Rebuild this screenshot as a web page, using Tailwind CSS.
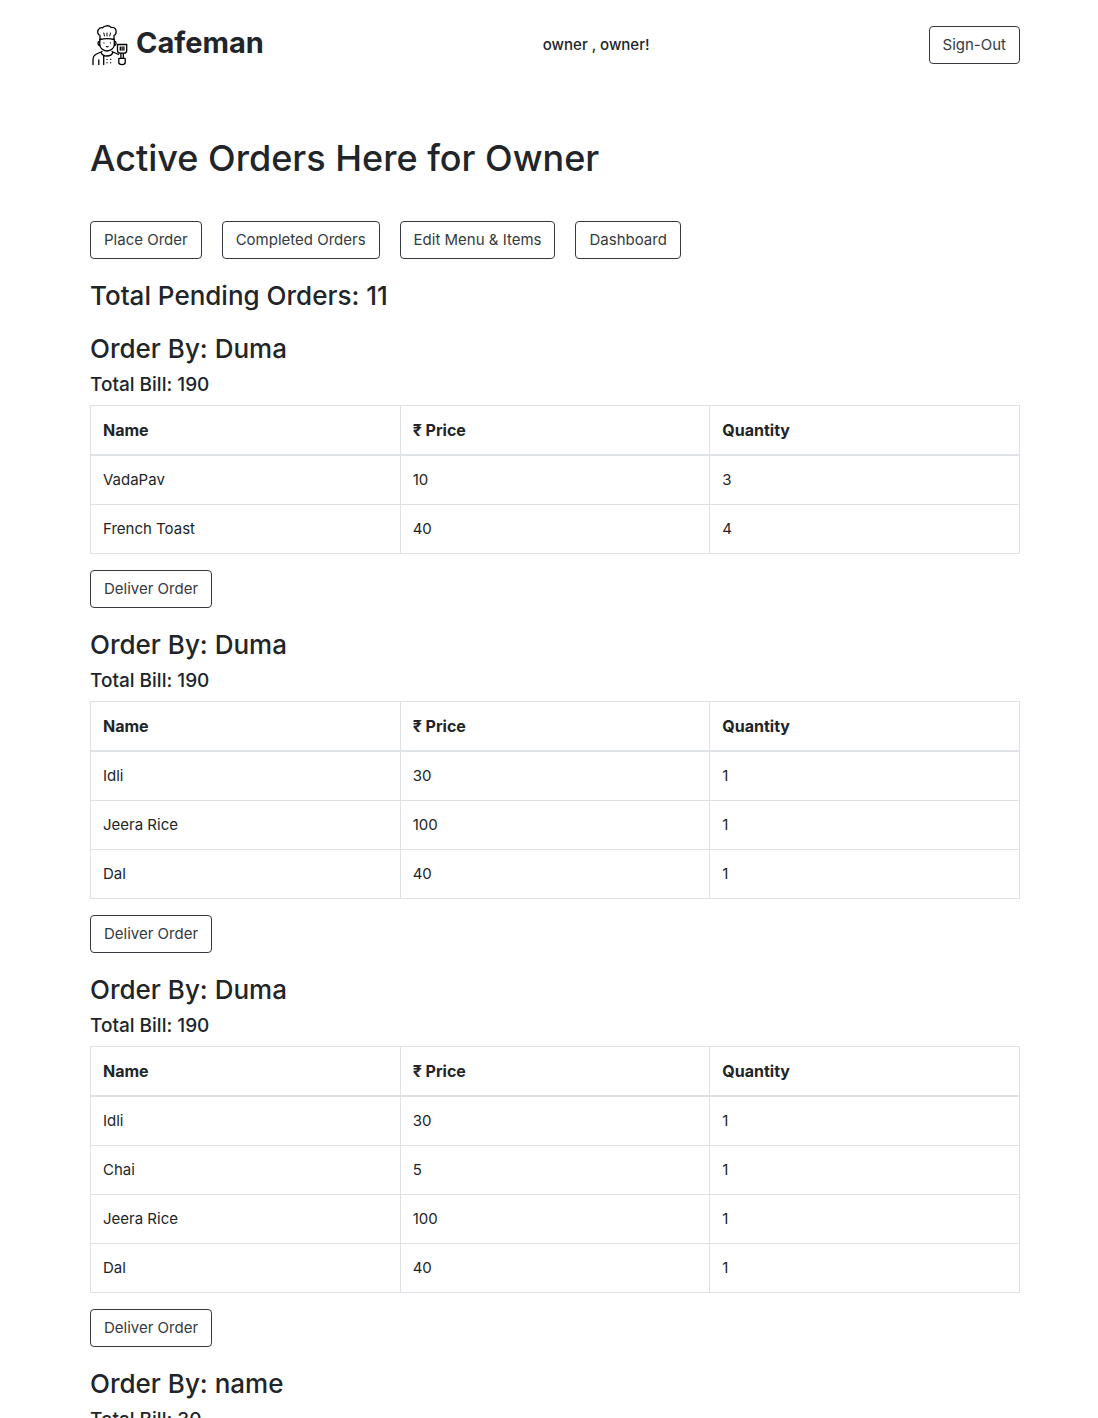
<!DOCTYPE html>
<html lang="en">
<head>
<meta charset="utf-8">
<meta name="viewport" content="width=device-width, initial-scale=1">
<title>Cafeman</title>
<script src="https://cdn.jsdelivr.net/npm/@tailwindcss/browser@4"></script>
</head>
<body class="bg-white pl-3 font-['Inter','Noto_Sans',sans-serif] text-[15px] leading-6 text-[#212529] overflow-x-hidden">
<div class="mx-auto max-w-[960px] px-[15px]">
  <header class="flex items-center justify-between pt-6">
    <a href="#" class="flex items-center gap-2">
      <svg class="ml-0.5 h-[42px] w-9" viewBox="0 0 36 42" fill="none" stroke="#000" stroke-width="1.3" stroke-linecap="round" stroke-linejoin="round" aria-hidden="true">
        <path d="M8 15.500V11.500C5.500 10.500 5 7.500 6.500 5.500C7.500 4 9 3.500 10.500 3.800C12 1.300 17.500 1 19 3.500C21 2.800 23.500 4 24 6.500C24.400 9 23.500 10.800 22 11.500V15.500C17 14.300 13 14.300 8 15.500Z"/>
        <path d="M11.800 9L12.500 12M15 9V12M18.500 9L17.800 12" stroke-width="1"/>
        <path d="M7.800 15.500V20.500C7.800 24 11 27 15 27C19 27 22.300 24 22.300 20.500V15.500M7.500 17.500C5.500 17 5.500 21.500 7.800 21.500M22.500 17.500C24.500 17 24.500 21.500 22.300 21.500"/>
        <path d="M12 18.700V19.100M18.300 18.700V19.100M14.300 22.600C15 23 15.600 23 16.200 22.600" stroke-width="1.100"/>
        <path d="M10 27.500L4.500 30C2 31.200 1 33 1 36V40.500M20 27.500L26.500 30.500M9 28.500C10 31 12 32 15 32C18 32 20 31 20.800 28.500M11.700 32V40.500M6.800 36V40.500"/>
        <path d="M15 35.300V35.400M18.700 35.300V35.400M15 38.700V38.800M18.700 38.700V38.800"/>
        <path d="M25.500 20.500H34.700V26.500C34.700 28.200 33.500 29.200 32 29.200H28.200C26.700 29.200 25.500 28.200 25.500 26.500ZM28.300 23V26.200M30.100 23V26.200M31.900 23V26.200M28.900 29.200V34.300M31.300 29.200V34.300"/>
        <path d="M26.800 34.300H33.200V38.500C33.200 41.200 26.800 41.200 26.800 38.500Z"/>
      </svg>
      <span class="pb-1 text-[29px] leading-9 font-bold">Cafeman</span>
    </a>
    <p class="font-medium">owner , owner!</p>
    <button type="button" class="h-[38px] rounded border border-[#343a40] px-[13px] text-[#343a40]">Sign-Out</button>
  </header>

  <main>
    <h1 class="mt-[68px] text-[36px] leading-[48px] font-medium">Active Orders Here for Owner</h1>
    <nav class="mt-[39px] flex flex-wrap gap-5" aria-label="Orders">
      <button type="button" class="h-[38px] rounded border border-[#343a40] px-[13px] text-[#343a40]">Place Order</button>
      <button type="button" class="h-[38px] rounded border border-[#343a40] px-[13px] text-[#343a40]">Completed Orders</button>
      <button type="button" class="h-[38px] rounded border border-[#343a40] px-[13px] text-[#343a40]">Edit Menu &amp; Items</button>
      <button type="button" class="h-[38px] rounded border border-[#343a40] px-[13px] text-[#343a40]">Dashboard</button>
    </nav>
    <h2 class="mt-5 text-[26px] leading-[33px] font-medium">Total Pending Orders: 11</h2>

    <div id="orders"></div>
  </main>
</div>

<template id="order-template">
  <section class="mt-5">
    <h3 class="text-[26px] leading-[34px] font-medium"></h3>
    <h4 class="mt-[7px] mb-2 text-[19px] leading-6 font-medium"></h4>
  </section>
</template>

<template id="items-template">
  <table class="w-full table-fixed border-collapse border border-[#dee2e6] text-left">
    <thead>
      <tr class="text-[16px] leading-6">
        <th class="border border-b-2 border-[#dee2e6] p-3 font-bold">Name</th>
        <th class="border border-b-2 border-[#dee2e6] p-3 font-bold">₹ Price</th>
        <th class="border border-b-2 border-[#dee2e6] p-3 font-bold">Quantity</th>
      </tr>
    </thead>
    <tbody></tbody>
  </table>
  <button type="button" class="mt-4 block h-[38px] rounded border border-[#343a40] px-[13px] text-[#343a40]">Deliver Order</button>
</template>

<script>
  const orders = [
    { by: 'Duma', bill: 190, items: [['VadaPav', 10, 3], ['French Toast', 40, 4]] },
    { by: 'Duma', bill: 190, items: [['Idli', 30, 1], ['Jeera Rice', 100, 1], ['Dal', 40, 1]] },
    { by: 'Duma', bill: 190, items: [['Idli', 30, 1], ['Chai', 5, 1], ['Jeera Rice', 100, 1], ['Dal', 40, 1]] },
    { by: 'name', bill: 30, items: [] },
  ];
  const orderTemplate = document.getElementById('order-template');
  const itemsTemplate = document.getElementById('items-template');
  for (const order of orders) {
    const section = orderTemplate.content.cloneNode(true).firstElementChild;
    section.querySelector('h3').textContent = 'Order By: ' + order.by;
    section.querySelector('h4').textContent = 'Total Bill: ' + order.bill;
    if (order.items.length) {
      section.append(itemsTemplate.content.cloneNode(true));
      for (const item of order.items) {
        const row = section.querySelector('tbody').insertRow();
        for (const value of item) {
          const cell = row.insertCell();
          cell.className = 'border border-[#dee2e6] p-3';
          cell.textContent = value;
        }
      }
    }
    document.getElementById('orders').append(section);
  }
</script>
</body>
</html>
